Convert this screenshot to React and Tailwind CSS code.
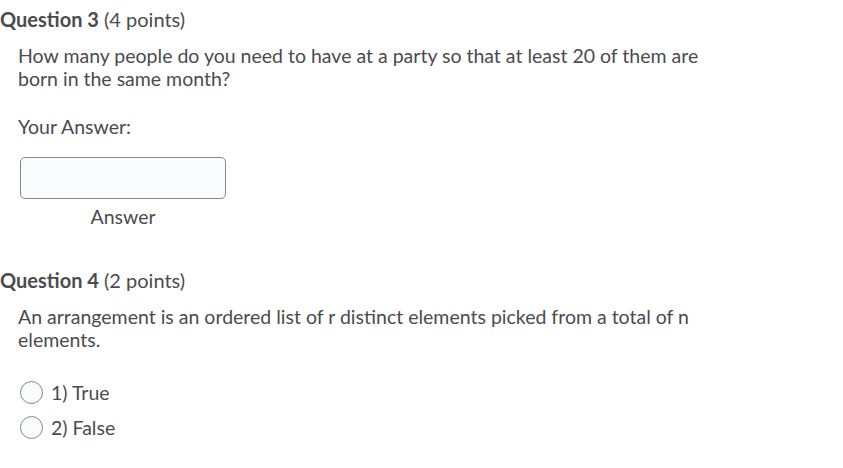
export default function App() {
  return (
    <div className="w-[843px] h-[468px] bg-white text-[#494c4e] font-['Lato',sans-serif] text-[19.5px] leading-[23px] overflow-hidden">
      <div className="pt-[7px]">
        <h2 className="text-[20px] leading-[24px]">
          <span className="font-bold">Question 3</span> (4 points)
        </h2>
        <div className="pl-[18px] pt-[13px]">
          <p className="w-[700px]">
            How many people do you need to have at a party so that at least 20 of them are born in the same month?
          </p>
          <p className="mt-[25px]">Your Answer:</p>
          <div className="mt-[19px] ml-[2px] w-[206px] flex flex-col items-center">
            <div className="w-[206px] h-[42px] rounded-[5px] border border-[#868686] bg-[#fafbfc]"></div>
            <div className="mt-[6px]">Answer</div>
          </div>
        </div>
      </div>
      <div className="pt-[40px]">
        <h2 className="text-[20px] leading-[24px]">
          <span className="font-bold">Question 4</span> (2 points)
        </h2>
        <div className="pl-[18px] pt-[13px]">
          <p className="w-[700px]">
            An arrangement is an ordered list of r distinct elements picked from a total of n elements.
          </p>
          <div className="mt-[30px] flex flex-col gap-[12px]">
            <label className="flex items-center gap-[8px] ml-[2px]">
              <span className="w-[23px] h-[23px] rounded-full border border-[#868686] bg-[#fafbfc]"></span>
              <span>1) True</span>
            </label>
            <label className="flex items-center gap-[8px] ml-[2px]">
              <span className="w-[23px] h-[23px] rounded-full border border-[#868686] bg-[#fafbfc]"></span>
              <span>2) False</span>
            </label>
          </div>
        </div>
      </div>
    </div>
  );
}
